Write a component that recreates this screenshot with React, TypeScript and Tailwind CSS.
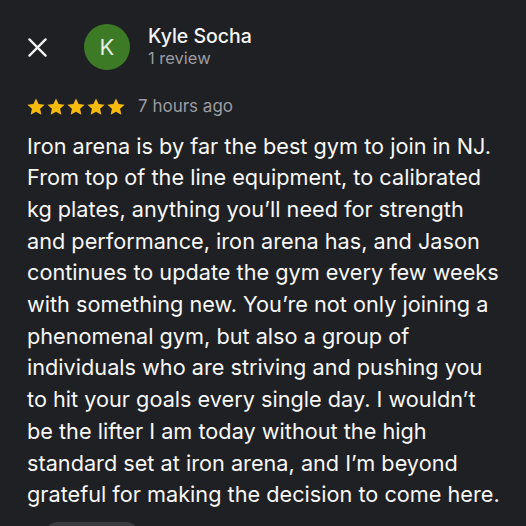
const LINES = [
  'Iron arena is by far the best gym to join in NJ.',
  'From top of the line equipment, to calibrated',
  'kg plates, anything you\u2019ll need for strength',
  'and performance, iron arena has, and Jason',
  'continues to update the gym every few weeks',
  'with something new. You\u2019re not only joining a',
  'phenomenal gym, but also a group of',
  'individuals who are striving and pushing you',
  'to hit your goals every single day. I wouldn\u2019t',
  'be the lifter I am today without the high',
  'standard set at iron arena, and I\u2019m beyond',
  'grateful for making the decision to come here.',
]

function Star() {
  return (
    <svg viewBox="0 0 24 24" className="h-[20px] w-[20px]" fill="#f7bb0e" aria-hidden="true">
      <path d="M12 1.8l3.1 6.6 7.2.8-5.4 4.9 1.5 7.1L12 17.6l-6.4 3.6 1.5-7.1L1.7 9.2l7.2-.8z" />
    </svg>
  )
}

export default function App() {
  return (
    <div
      className="h-[526px] w-[526px] overflow-hidden bg-[#1f2023] text-white"
      style={{ fontFamily: 'Inter, "Noto Sans", sans-serif' }}
    >
      {/* header */}
      <div className="flex items-center pt-[24px]">
        <svg viewBox="0 0 20 20" className="ml-[28px] h-[19px] w-[19px]" aria-hidden="true">
          <path d="M1.5 1.5L18.5 18.5M18.5 1.5L1.5 18.5" stroke="#f2f2f2" strokeWidth="2.4" strokeLinecap="round" />
        </svg>
        <div className="ml-[37px] flex h-[46px] w-[46px] items-center justify-center rounded-full bg-[#3c7a26] text-[22px] text-[#e6efe2]">
          K
        </div>
        <div className="ml-[18px] flex flex-col -mt-[2px]">
          <div className="text-[19.5px] leading-[24px] font-medium text-[#f4f4f4]">Kyle Socha</div>
          <div className="text-[16.5px] leading-[21px] text-[#9b9ca1]">1 review</div>
        </div>
      </div>

      {/* rating */}
      <div className="mt-[24px] ml-[26px] flex items-center">
        <div className="flex">
          <Star />
          <Star />
          <Star />
          <Star />
          <Star />
        </div>
        <span className="ml-[12px] text-[17px] text-[#9b9ca1]">7 hours ago</span>
      </div>

      {/* body */}
      <div className="mt-[11px] ml-[27px] text-[21.7px] leading-[31.7px] text-[#f7f7f7]">
        {LINES.map((l) => (
          <div key={l} className="whitespace-nowrap">
            {l}
          </div>
        ))}
      </div>

      <div className="ml-[47px] mt-[11px] h-[20px] w-[90px] rounded-full bg-[#3a3b3f]" />
    </div>
  )
}
